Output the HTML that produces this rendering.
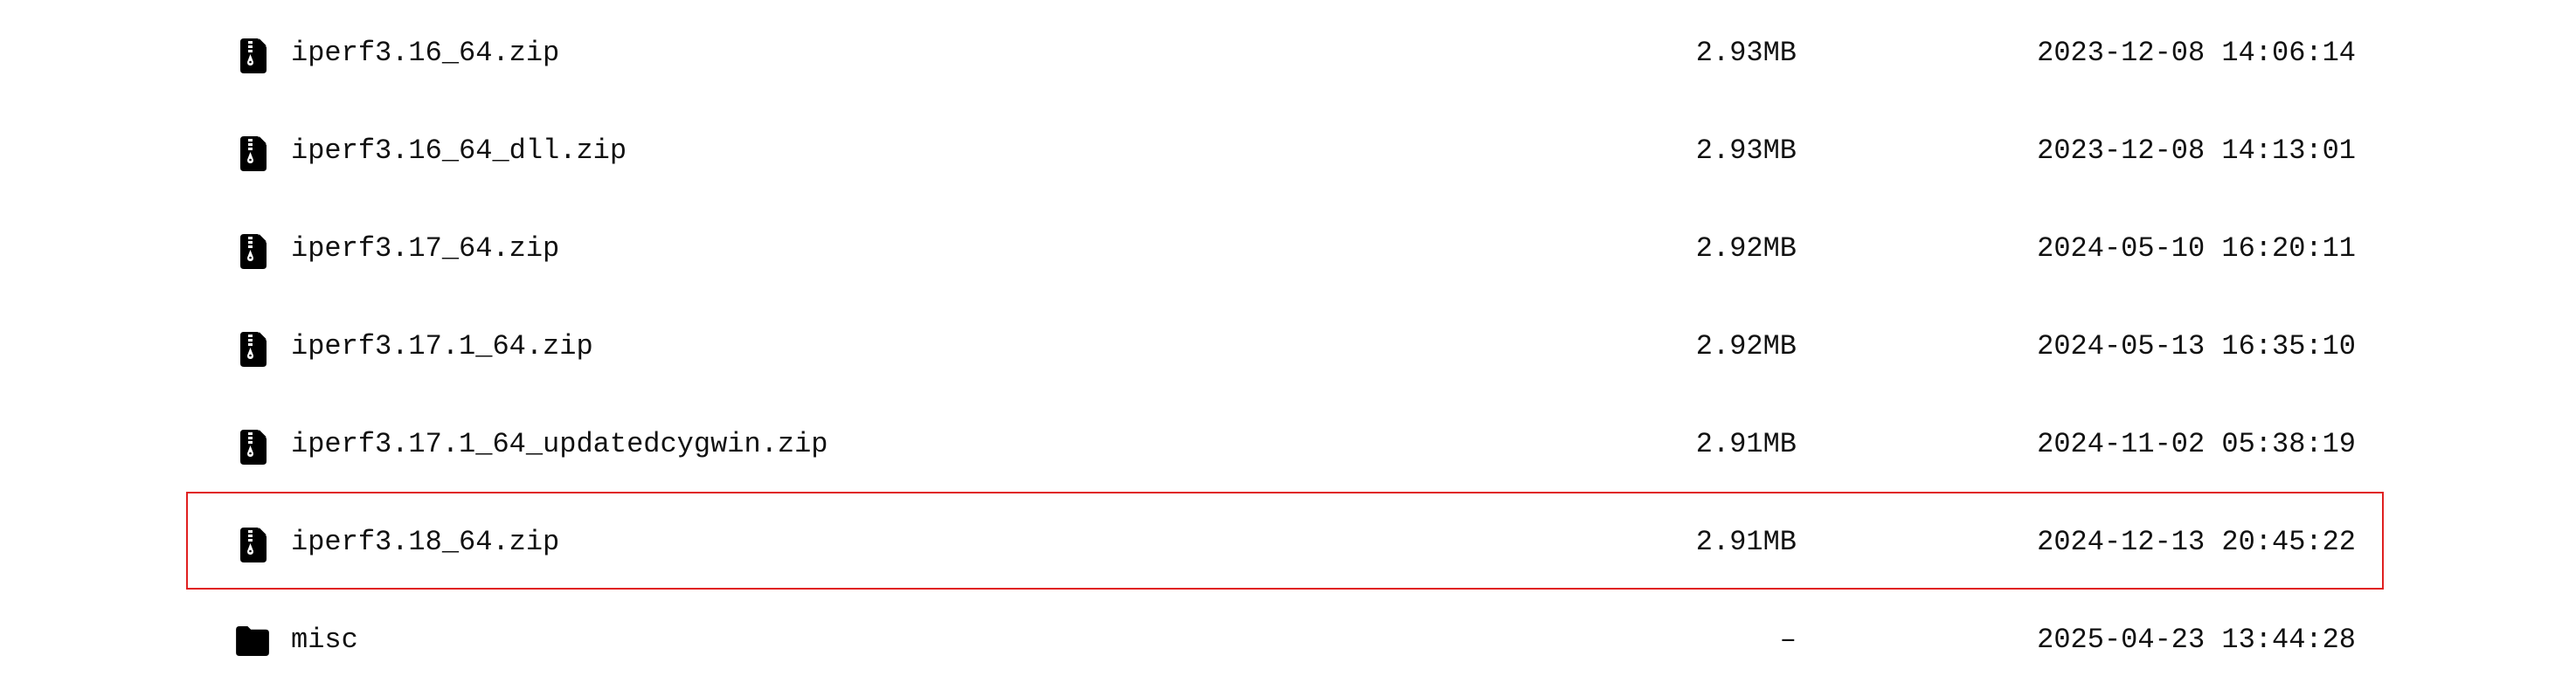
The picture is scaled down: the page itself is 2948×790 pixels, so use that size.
<!DOCTYPE html>
<html><head><meta charset="utf-8"><style>
body{margin:0;width:2948px;height:790px;background:#fff;position:relative;overflow:hidden;font-family:"Liberation Mono",monospace;font-size:32px;color:#111}
.row{position:absolute;left:0;width:2948px;height:112px}
.ic{position:absolute;left:275px;top:40px}
.name{position:absolute;left:333px;top:37px;line-height:40px}
.size{position:absolute;right:892px;top:37px;line-height:40px}
.date{position:absolute;right:252px;top:37px;line-height:40px}
.box{position:absolute;left:213px;top:563px;width:2511px;height:108px;border:2px solid #e02020}
</style></head><body>
<svg width="0" height="0" style="position:absolute"><defs>
<symbol id="z" viewBox="0 0 30 40"><path d="M4 0H20L30 10V36Q30 40 26 40H4Q0 40 0 36V4Q0 0 4 0Z" fill="#000"/><rect x="21.5" y="0" width="8.5" height="8.5" fill="#fff"/><path d="M21.5 0L30 8.5H21.5Z" fill="#000"/><rect x="9" y="3" width="5" height="3" fill="#fff"/><rect x="9" y="8" width="5" height="3" fill="#fff"/><rect x="9" y="13" width="5" height="3" fill="#fff"/><path d="M11.5 18L15 27Q15 31 11.5 31Q8 31 8 27Z" fill="#fff"/><circle cx="11.5" cy="27" r="1.3" fill="#000"/></symbol>
</defs></svg>
<div class="row" style="top:4px"><svg class="ic" width="30" height="40"><use href="#z"/></svg><span class="name">iperf3.16_64.zip</span><span class="size">2.93MB</span><span class="date">2023-12-08 14:06:14</span></div>
<div class="row" style="top:116px"><svg class="ic" width="30" height="40"><use href="#z"/></svg><span class="name">iperf3.16_64_dll.zip</span><span class="size">2.93MB</span><span class="date">2023-12-08 14:13:01</span></div>
<div class="row" style="top:228px"><svg class="ic" width="30" height="40"><use href="#z"/></svg><span class="name">iperf3.17_64.zip</span><span class="size">2.92MB</span><span class="date">2024-05-10 16:20:11</span></div>
<div class="row" style="top:340px"><svg class="ic" width="30" height="40"><use href="#z"/></svg><span class="name">iperf3.17.1_64.zip</span><span class="size">2.92MB</span><span class="date">2024-05-13 16:35:10</span></div>
<div class="row" style="top:452px"><svg class="ic" width="30" height="40"><use href="#z"/></svg><span class="name">iperf3.17.1_64_updatedcygwin.zip</span><span class="size">2.91MB</span><span class="date">2024-11-02 05:38:19</span></div>
<div class="box"></div>
<div class="row" style="top:564px"><svg class="ic" width="30" height="40"><use href="#z"/></svg><span class="name">iperf3.18_64.zip</span><span class="size">2.91MB</span><span class="date">2024-12-13 20:45:22</span></div>
<div class="row" style="top:676px"><svg class="ic" width="38" height="34" style="left:270px;top:41px" viewBox="0 0 40 36"><path d="M4 0H14L18 4H36Q40 4 40 8V32Q40 36 36 36H4Q0 36 0 32V4Q0 0 4 0Z" fill="#000"/></svg><span class="name">misc</span><span class="size">–</span><span class="date">2025-04-23 13:44:28</span></div>
</body></html>
